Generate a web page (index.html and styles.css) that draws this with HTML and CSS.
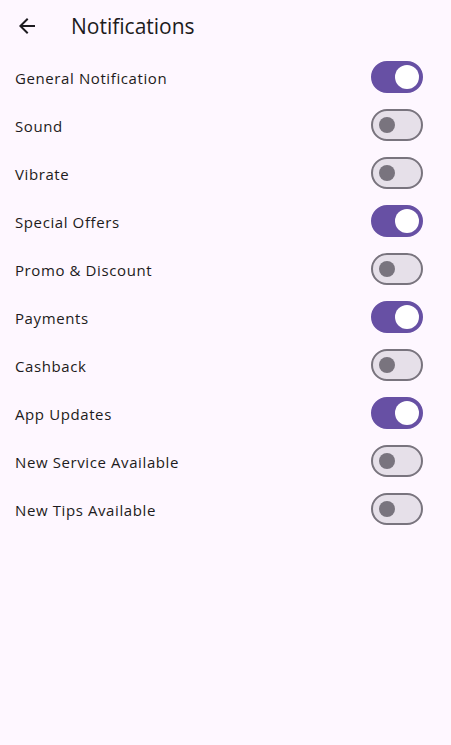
FILE: index.html
```html
<!DOCTYPE html>
<html>
<head>
<meta charset="utf-8">
<link rel="stylesheet" href="styles.css">
</head>
<body>
<header class="appbar">
  <span class="back">
    <svg width="24" height="24" viewBox="0 0 24 24"><path d="M20 11H7.83l5.59-5.59L12 4l-8 8 8 8 1.41-1.41L7.83 13H20v-2z" fill="#1D1B20"/></svg>
  </span>
  <h1 class="title">Notifications</h1>
</header>
<main class="list">
  <div class="row"><span class="label">General Notification</span><span class="switch on"><span class="thumb"></span></span></div>
  <div class="row"><span class="label">Sound</span><span class="switch"><span class="thumb"></span></span></div>
  <div class="row"><span class="label">Vibrate</span><span class="switch"><span class="thumb"></span></span></div>
  <div class="row"><span class="label">Special Offers</span><span class="switch on"><span class="thumb"></span></span></div>
  <div class="row"><span class="label">Promo &amp; Discount</span><span class="switch"><span class="thumb"></span></span></div>
  <div class="row"><span class="label">Payments</span><span class="switch on"><span class="thumb"></span></span></div>
  <div class="row"><span class="label">Cashback</span><span class="switch"><span class="thumb"></span></span></div>
  <div class="row"><span class="label">App Updates</span><span class="switch on"><span class="thumb"></span></span></div>
  <div class="row"><span class="label">New Service Available</span><span class="switch"><span class="thumb"></span></span></div>
  <div class="row"><span class="label">New Tips Available</span><span class="switch"><span class="thumb"></span></span></div>
</main>
</body>
</html>
```
FILE: styles.css
```css
html, body {
  margin: 0;
  padding: 0;
  background: #FEF7FF;
  height: 100%;
}
body {
  font-family: "Open Sans", "Noto Sans", sans-serif;
  color: #1D1B20;
}
.appbar {
  height: 52px;
  display: flex;
  align-items: center;
  padding-left: 15px;
}
.back {
  width: 24px;
  height: 24px;
  display: flex;
}
.title {
  margin: 0 0 0 32px;
  font-weight: 400;
  font-size: 21px;
}
.list {
  display: flex;
  flex-direction: column;
  padding-top: 1px;
}
.row {
  height: 48px;
  display: flex;
  align-items: center;
  justify-content: space-between;
  padding: 0 28px 0 15px;
}
.label {
  font-size: 15px;
  letter-spacing: 0.6px;
  padding-top: 2px;
}
.switch {
  box-sizing: border-box;
  width: 52px;
  height: 32px;
  border-radius: 16px;
  background: #E6E0E9;
  border: 2px solid #79747E;
  display: flex;
  align-items: center;
  padding-left: 6px;
}
.switch .thumb {
  width: 16px;
  height: 16px;
  border-radius: 50%;
  background: #79747E;
}
.switch.on {
  background: #6750A4;
  border-color: #6750A4;
  padding-left: 22px;
}
.switch.on .thumb {
  width: 24px;
  height: 24px;
  background: #FFFFFF;
}
```
